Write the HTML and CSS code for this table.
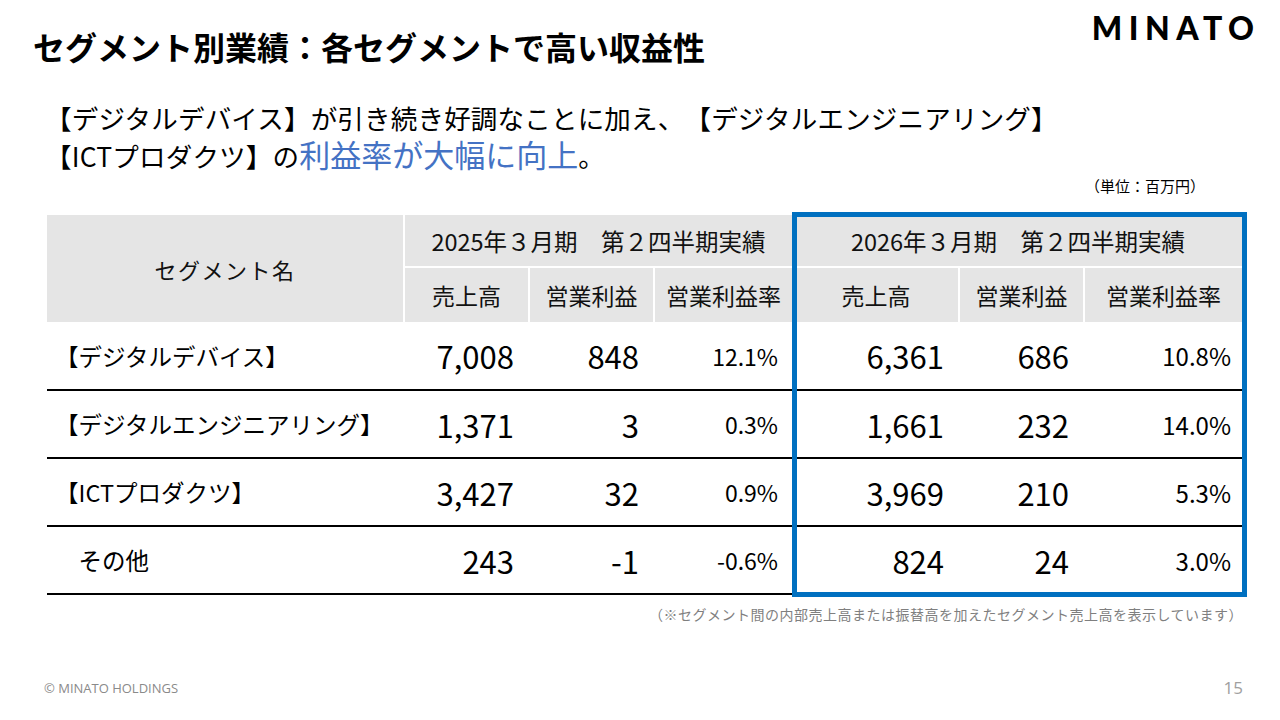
FILE: index.html
```html
<!DOCTYPE html>
<html lang="ja">
<head>
<meta charset="utf-8">
<title>セグメント別業績</title>
<link rel="stylesheet" href="styles.css">
</head>
<body>
<div class="slide">
  <header class="top">
    <h1 class="title">セグメント別業績：各セグメントで高い収益性</h1>
    <div class="logo">MINATO</div>
  </header>

  <p class="lead">【デジタルデバイス】が引き続き好調なことに加え、【デジタルエンジニアリング】<br>【ICTプロダクツ】の<span class="hl">利益率が大幅に向上</span>。</p>

  <div class="unit">（単位：百万円）</div>

  <div class="tbl-wrap">
    <div class="tbl">
      <div class="th name-h">セグメント名</div>
      <div class="th grp">2025年３月期　第２四半期実績</div>
      <div class="th grp">2026年３月期　第２四半期実績</div>
      <div class="th sub">売上高</div>
      <div class="th sub">営業利益</div>
      <div class="th sub">営業利益率</div>
      <div class="th sub">売上高</div>
      <div class="th sub">営業利益</div>
      <div class="th sub">営業利益率</div>

      <div class="td lbl">【デジタルデバイス】</div>
      <div class="td num">7,008</div>
      <div class="td num">848</div>
      <div class="td pct">12.1%</div>
      <div class="td num">6,361</div>
      <div class="td num">686</div>
      <div class="td pct r">10.8%</div>

      <div class="td lbl">【デジタルエンジニアリング】</div>
      <div class="td num">1,371</div>
      <div class="td num">3</div>
      <div class="td pct">0.3%</div>
      <div class="td num">1,661</div>
      <div class="td num">232</div>
      <div class="td pct r">14.0%</div>

      <div class="td lbl">【ICTプロダクツ】</div>
      <div class="td num">3,427</div>
      <div class="td num">32</div>
      <div class="td pct">0.9%</div>
      <div class="td num">3,969</div>
      <div class="td num">210</div>
      <div class="td pct r">5.3%</div>

      <div class="td lbl">　その他</div>
      <div class="td num">243</div>
      <div class="td num">-1</div>
      <div class="td pct">-0.6%</div>
      <div class="td num">824</div>
      <div class="td num">24</div>
      <div class="td pct r">3.0%</div>
    </div>
    <div class="focus"></div>
  </div>

  <p class="note">（※セグメント間の内部売上高または振替高を加えたセグメント売上高を表示しています）</p>

  <footer class="foot">
    <span class="copy">© MINATO HOLDINGS</span>
    <span class="page">15</span>
  </footer>
</div>
</body>
</html>
```

FILE: styles.css
```css
* { box-sizing: border-box; }
html, body { margin: 0; padding: 0; background: #fff; }
body {
  font-family: "Noto Sans CJK JP", "Noto Sans", sans-serif;
  color: #000;
  text-spacing-trim: space-all;
}

.slide {
  width: 1280px;
  height: 720px;
  display: flex;
  flex-direction: column;
  overflow: hidden;
}

.top {
  display: flex;
  justify-content: space-between;
  align-items: flex-start;
  padding: 12px 26px 0 33px;
}
.title {
  margin: 15px 0 0;
  font-size: 32px;
  line-height: 38px;
  font-weight: 700;
  letter-spacing: 0;
}
.logo {
  font-family: Lato, "Open Sans", sans-serif;
  font-weight: 900;
  font-size: 32px;
  line-height: 32px;
  letter-spacing: 6.5px;
  margin-right: -6.5px;
  color: #000;
}

.lead {
  margin: 34px 0 0 45px;
  font-size: 26.5px;
  line-height: 38px;
  letter-spacing: 0.2px;
  color: #000;
}
.hl {
  display: inline-block;
  color: #4472c4;
  font-size: 31px;
  line-height: 31px;
  letter-spacing: 0;
}

.unit {
  margin-top: 1px;
  text-align: right;
  padding-right: 75px;
  font-size: 15px;
  line-height: 20px;
}

.tbl-wrap {
  position: relative;
  margin: 19px 0 0 47px;
  width: 1196px;
}
.tbl {
  display: grid;
  grid-template-columns: 356px 125px 125px 139px 166px 125px 159px;
  grid-template-rows: 53px 54px 69px 68px 68px 68px;
}
.th {
  background: #e5e5e5;
  display: flex;
  align-items: center;
  justify-content: center;
  font-size: 22px;
  color: #111;
}
.name-h {
  grid-row: 1 / span 2;
  letter-spacing: 1.5px;
}
.grp {
  grid-column: span 3;
  border-left: 2px solid #fff;
  border-bottom: 2px solid #fff;
  font-size: 23.5px;
}
.sub {
  border-left: 2px solid #fff;
  font-size: 23px;
}
.td {
  display: flex;
  align-items: center;
  border-bottom: 2px solid #000;
}
.lbl {
  padding-left: 8px;
  font-size: 23.5px;
}
.num {
  justify-content: flex-end;
  padding-right: 14px;
  font-size: 31px;
}
.pct {
  justify-content: flex-end;
  padding-right: 14px;
  font-size: 23px;
}
.pct.r { padding-right: 11px; font-size: 24px; }

.focus {
  position: absolute;
  top: -3px;
  left: 745px;
  width: 455px;
  height: 385px;
  border: 5px solid #0070c0;
}

.note {
  margin: 9px 0 0;
  text-align: right;
  padding-right: 37px;
  font-size: 14px;
  line-height: 20px;
  letter-spacing: 0.5px;
  color: #7f7f7f;
}

.foot {
  margin-top: auto;
  display: flex;
  justify-content: space-between;
  align-items: center;
  padding: 0 37px 22px 44px;
  font-family: "Open Sans", sans-serif;
  color: #8a8a8a;
  line-height: 20px;
}
.copy { font-size: 13px; }
.page { font-size: 17px; color: #a0a0a0; }
```
